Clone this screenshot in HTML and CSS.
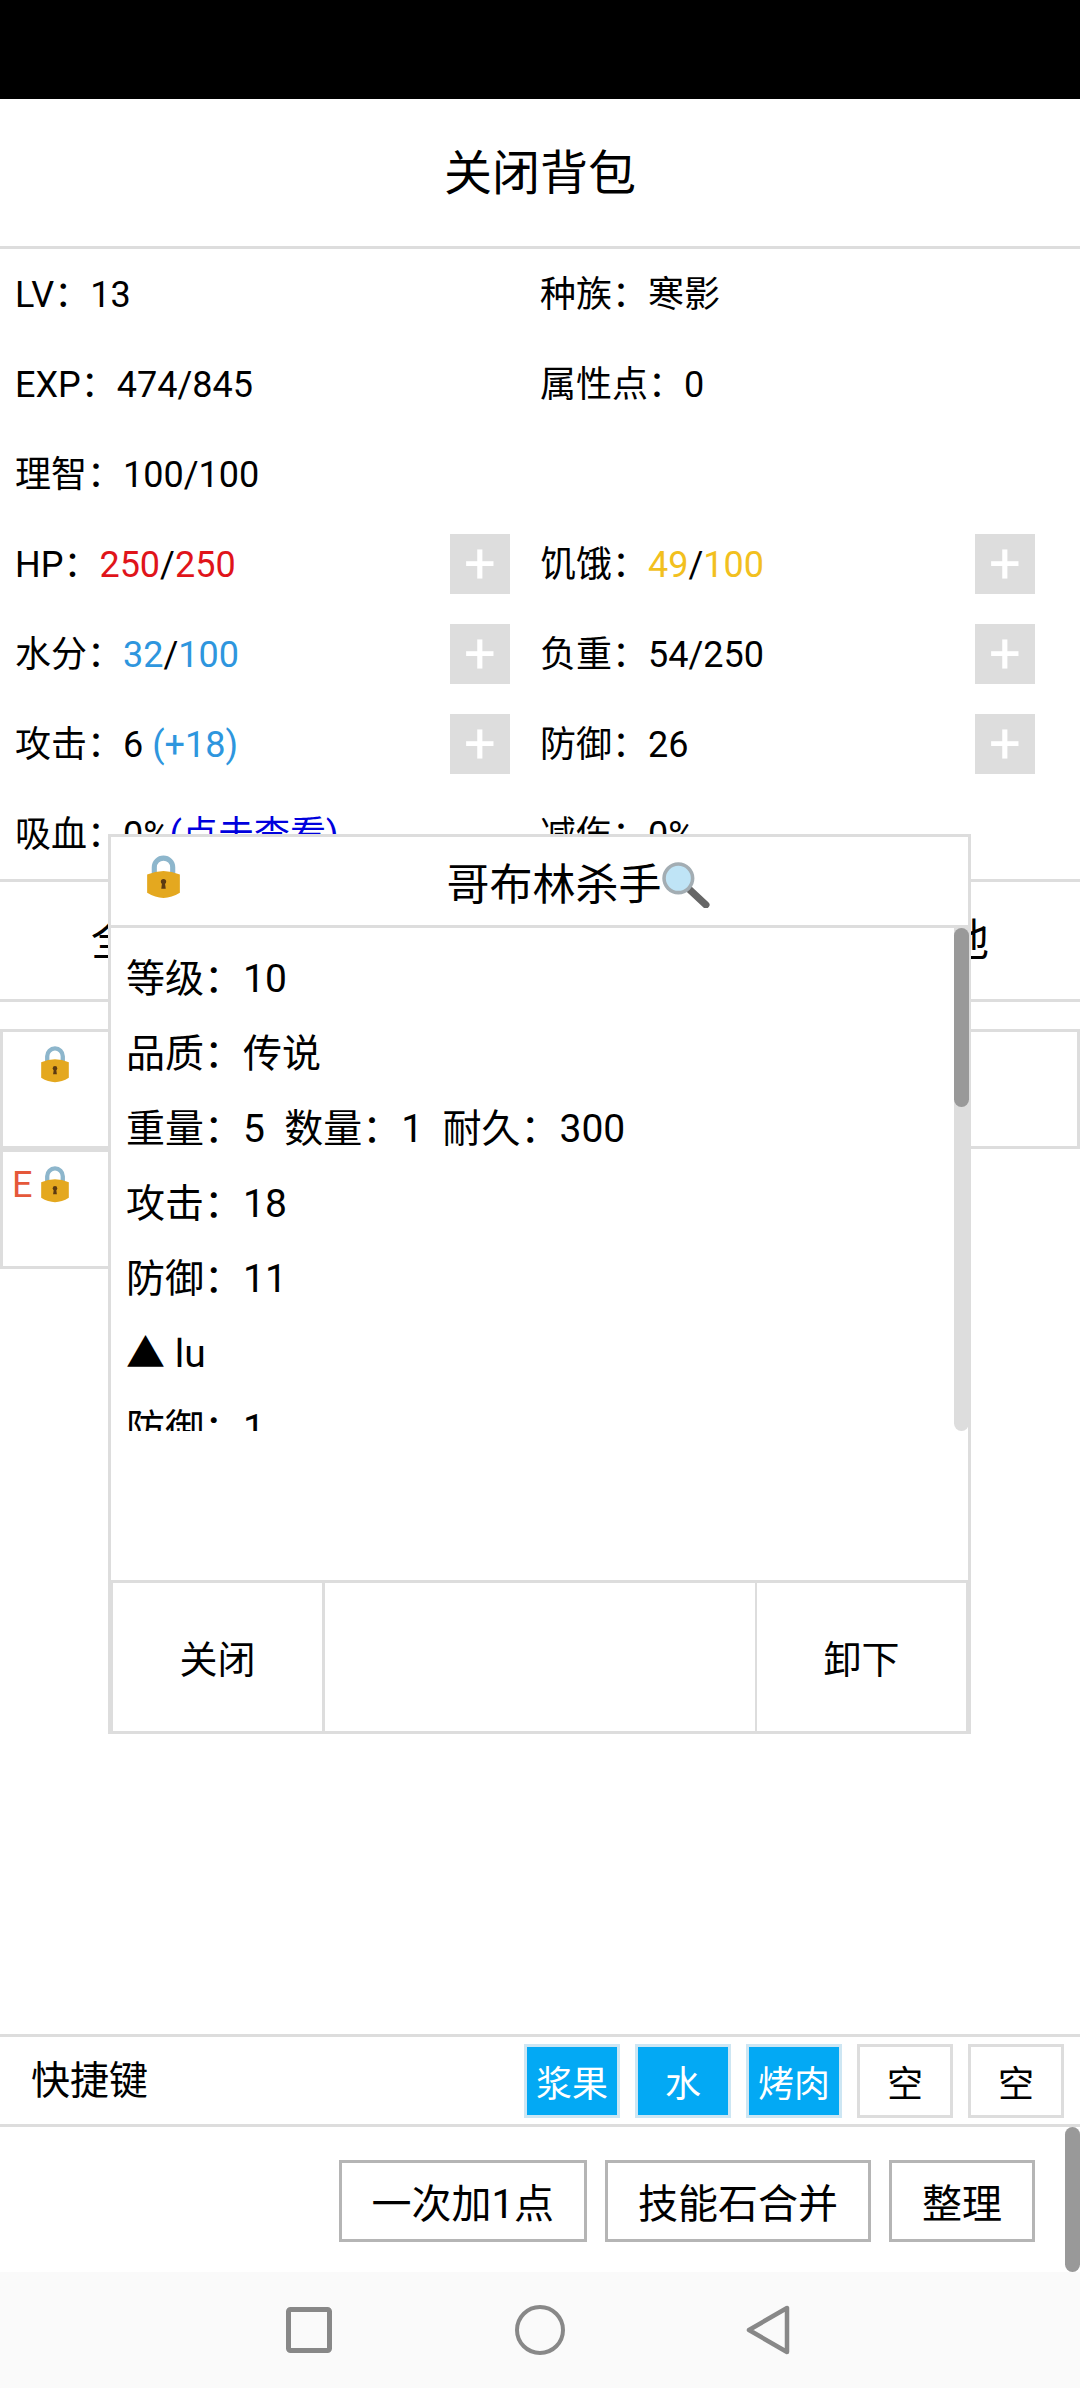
FILE: index.html
```html
<!DOCTYPE html>
<html lang="zh-CN">
<head>
    <meta charset="UTF-8">
    <meta name="viewport" content="width=device-width, initial-scale=1.0">
    <title>背包</title>
    <link rel="stylesheet" href="styles.css">
</head>
<body>
    <svg class="defs" width="0" height="0">
        <symbol id="lock" viewBox="0 0 32 44">
            <path d="M7 24V13a9 9 0 0 1 18 0V24" fill="none" stroke="#8db6cc" stroke-width="5"/>
            <path d="M0 20Q16 13 32 20V38Q16 48 0 38Z" fill="#e4a81f"/>
            <circle cx="16" cy="27" r="2.6" fill="#5b3a12"/>
            <path d="M14.8 27h2.4l1 7h-4.4z" fill="#5b3a12"/>
        </symbol>
    </svg>

    <div class="status-bar"></div>
    <div class="title-bar">关闭背包</div>

    <div class="stats">
        <div class="stat"><span>LV：13</span></div>
        <div class="stat"><span>种族：寒影</span></div>
        <div class="stat"><span>EXP：474/845</span></div>
        <div class="stat"><span>属性点：0</span></div>
        <div class="stat"><span>理智：100/100</span></div>
        <div class="stat"></div>
        <div class="stat"><span>HP：<b class="red">250</b>/<b class="red">250</b></span><button class="plus">+</button></div>
        <div class="stat"><span>饥饿：<b class="yellow">49</b>/<b class="yellow">100</b></span><button class="plus">+</button></div>
        <div class="stat"><span>水分：<b class="blue">32</b>/<b class="blue">100</b></span><button class="plus">+</button></div>
        <div class="stat"><span>负重：54/250</span><button class="plus">+</button></div>
        <div class="stat"><span>攻击：6 <b class="blue">(+18)</b></span><button class="plus">+</button></div>
        <div class="stat"><span>防御：26</span><button class="plus">+</button></div>
        <div class="stat"><span>吸血：0%<a class="link">(点击查看)</a></span></div>
        <div class="stat"><span>减伤：0%</span></div>
    </div>

    <div class="tabs">
        <div class="tab">全部</div>
        <div class="tab">装备</div>
        <div class="tab">道具</div>
        <div class="tab">其他</div>
    </div>

    <div class="items">
        <div class="item"><svg class="lock-small"><use href="#lock"/></svg></div>
        <div class="item"></div>
        <div class="item"></div>
        <div class="item"></div>
        <div class="item"></div>
        <div class="item"><span class="equip">E</span><svg class="lock-small"><use href="#lock"/></svg></div>
    </div>

    <div class="hotkeys">
        <div class="hotkeys-label">快捷键</div>
        <div class="hotkey on">浆果</div>
        <div class="hotkey on">水</div>
        <div class="hotkey on">烤肉</div>
        <div class="hotkey">空</div>
        <div class="hotkey">空</div>
    </div>

    <div class="actions">
        <button class="action">一次加1点</button>
        <button class="action">技能石合并</button>
        <button class="action">整理</button>
        <div class="page-thumb"></div>
    </div>

    <div class="nav-bar">
        <svg width="46" height="46" viewBox="0 0 46 46"><rect x="2.5" y="2.5" width="41" height="41" rx="2" fill="none" stroke="#888" stroke-width="5"/></svg>
        <svg width="50" height="50" viewBox="0 0 50 50"><circle cx="25" cy="25" r="23" fill="none" stroke="#888" stroke-width="4"/></svg>
        <svg width="44" height="50" viewBox="0 0 44 50"><path d="M41 3V47L3 25Z" fill="none" stroke="#888" stroke-width="4.5" stroke-linejoin="round"/></svg>
    </div>

    <!-- item popup -->
    <div class="modal">
        <div class="modal-head">
            <svg class="lock-big"><use href="#lock"/></svg>
            <div class="modal-title">哥布林杀手<svg class="magnifier" viewBox="0 0 47 45">
                <path d="M27 27L43 42" stroke="#666" stroke-width="7" stroke-linecap="round"/>
                <circle cx="16" cy="16" r="14" fill="#bfe4f6" stroke="#a3adb3" stroke-width="3.5"/>
            </svg></div>
        </div>
        <div class="modal-body">
            <div class="modal-text">
                <p>等级：10</p>
                <p>品质：传说</p>
                <p>重量：5&nbsp;&nbsp;数量：1&nbsp;&nbsp;耐久：300</p>
                <p>攻击：18</p>
                <p>防御：11</p>
                <p>▲ lu</p>
                <p>防御：1</p>
            </div>
            <div class="track"><div class="thumb"></div></div>
        </div>
        <div class="modal-space"></div>
        <div class="modal-buttons">
            <div class="modal-btn">关闭</div>
            <div class="modal-btn mid"></div>
            <div class="modal-btn">卸下</div>
        </div>
    </div>
</body>
</html>
```

FILE: styles.css
```css
* {
    box-sizing: border-box;
}
html, body {
    margin: 0;
    padding: 0;
}
body {
    position: relative;
    width: 1080px;
    height: 2388px;
    overflow: hidden;
    display: flex;
    flex-direction: column;
    background-color: #fff;
    color: #000;
    font-family: Roboto, "Noto Sans CJK SC", sans-serif;
    font-size: 36px;
}
b {
    font-weight: normal;
}
.defs {
    position: absolute;
}
.red {
    color: #e0141a;
}
.yellow {
    color: #f2c01e;
}
.blue {
    color: #2e96de;
}
.link {
    color: #0000dd;
}
.status-bar {
    height: 99px;
    background-color: #000;
}
.title-bar {
    height: 150px;
    padding-bottom: 7px;
    border-bottom: 3px solid #ddd;
    display: flex;
    align-items: center;
    justify-content: center;
    font-size: 48px;
}
.stats {
    height: 633px;
    border-bottom: 3px solid #ddd;
    display: grid;
    grid-template-columns: 1fr 1fr;
    grid-auto-rows: 90px;
}
.stat {
    display: flex;
    align-items: center;
    justify-content: space-between;
    padding: 0 30px 0 15px;
}
.stat span {
    margin-bottom: 7px;
}
.stat:nth-child(even) {
    padding: 0 45px 0 0;
}
.plus {
    width: 60px;
    height: 60px;
    padding: 0;
    border: none;
    background-color: #ddd;
    color: #fff;
    font-family: Roboto, sans-serif;
    font-size: 56px;
    line-height: 60px;
}
.tabs {
    height: 120px;
    padding-bottom: 7px;
    border-bottom: 3px solid #ddd;
    display: grid;
    grid-template-columns: repeat(4, 1fr);
    align-items: center;
    text-align: center;
    font-size: 44px;
}
.items {
    flex: 1;
    padding-top: 27px;
    display: grid;
    grid-template-columns: repeat(5, 1fr);
    grid-auto-rows: 120px;
    align-content: start;
}
.item {
    border: 3px solid #ddd;
    padding: 13px 0 0 9px;
    display: flex;
    align-items: flex-start;
    line-height: 40px;
}
.equip {
    width: 29px;
    color: #e5583a;
}
.lock-small {
    width: 28px;
    height: 38px;
}
.item > .lock-small:first-child {
    margin-left: 29px;
}
.hotkeys {
    height: 93px;
    border-top: 3px solid #ddd;
    border-bottom: 3px solid #ddd;
    display: flex;
    align-items: center;
    gap: 15px;
    padding: 0 16px 0 31px;
}
.hotkeys-label {
    margin-right: auto;
    padding-bottom: 8px;
    font-size: 39px;
}
.hotkey {
    width: 96px;
    height: 74px;
    border: 3px solid #ddd;
    display: flex;
    align-items: center;
    justify-content: center;
}
.hotkey.on {
    border-color: #cde6f3;
    background-color: #03a9f4;
    color: #fff;
}
.actions {
    position: relative;
    height: 145px;
    display: flex;
    align-items: center;
    justify-content: flex-end;
    gap: 18px;
    padding: 2px 45px 0 0;
}
.action {
    height: 82px;
    padding: 0 30px;
    border: 3px solid #b5b5b5;
    background-color: #fff;
    color: #000;
    font-family: inherit;
    font-size: 40px;
}
.page-thumb {
    position: absolute;
    top: 0;
    right: 0;
    width: 15px;
    height: 145px;
    border-radius: 8px;
    background-color: #999;
}
.nav-bar {
    height: 116px;
    background-color: #fafafa;
    display: flex;
    align-items: center;
    padding-left: 286px;
    gap: 183px;
}
.nav-bar svg:last-child {
    margin-left: -2px;
}

/* item popup */
.modal {
    position: absolute;
    left: 108px;
    top: 834px;
    width: 863px;
    height: 900px;
    border: 3px solid #ddd;
    background-color: #fff;
    display: flex;
    flex-direction: column;
}
.modal-head {
    height: 91px;
    flex: none;
    border-bottom: 3px solid #ddd;
    display: flex;
}
.lock-big {
    flex: none;
    width: 33px;
    height: 45px;
    margin: 17px 8px 0 36px;
}
.modal-title {
    flex: 1;
    display: flex;
    align-items: center;
    justify-content: center;
    font-size: 43px;
}
.magnifier {
    width: 48px;
    height: 46px;
    margin-top: 8px;
}
.modal-body {
    height: 503px;
    flex: none;
    display: flex;
}
.modal-text {
    flex: 1;
    overflow: hidden;
    padding: 14px 0 0 15px;
    font-size: 39px;
}
.modal-text p {
    margin: 0;
    height: 75px;
    line-height: 75px;
    white-space: nowrap;
}
.track {
    width: 15px;
    margin-right: -1px;
    border-radius: 0 0 8px 8px;
    background-color: #ddd;
}
.thumb {
    height: 179px;
    border-radius: 8px;
    background-color: #999;
}
.modal-space {
    flex: 1;
}
.modal-buttons {
    height: 151px;
    flex: none;
    display: flex;
    font-size: 38px;
}
.modal-btn {
    width: 214px;
    padding-bottom: 2px;
    border: 3px solid #ddd;
    border-bottom: none;
    border-left-width: 2px;
    margin-right: -1px;
    display: flex;
    align-items: center;
    justify-content: center;
}
.modal-btn.mid {
    flex: 1;
    border-left-width: 0;
    border-right-width: 0;
}
```
